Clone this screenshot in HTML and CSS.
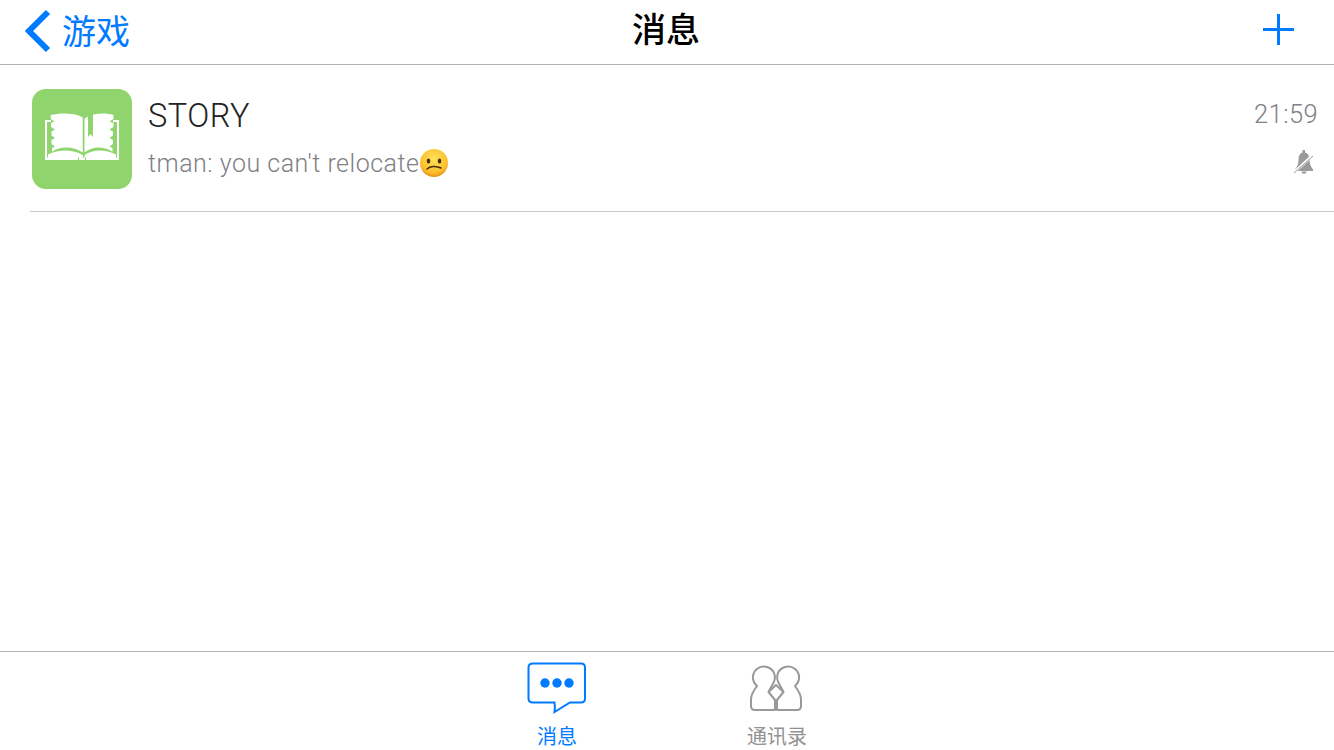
FILE: index.html
```html
<!DOCTYPE html>
<html lang="zh">
<head>
<meta charset="utf-8">
<title>消息</title>
<link rel="stylesheet" href="styles.css">
</head>
<body>
<div class="app">
  <header class="nav">
    <div class="nav-left">
      <svg class="back" width="28" height="44" viewBox="0 0 28 44"><path d="M25 3 L6 22 L25 41" fill="none" stroke="#007aff" stroke-width="6"/></svg>
      <span class="back-label">游戏</span>
    </div>
    <h1 class="nav-title">消息</h1>
    <svg class="plus" width="31" height="31" viewBox="0 0 31 31"><path d="M15.500 0V31M0 15.500H31" stroke="#007aff" stroke-width="3"/></svg>
  </header>
  <main class="list">
    <div class="row">
      <div class="avatar">
        <svg width="74" height="47" viewBox="0 0 74 47">
          <path d="M0 7H6V9H2V44.500H72V9H68V7H74V47H0Z" fill="#fff"/>
          <path d="M5.700 2C14 0 28 -1 37.700 4.300V39.500C28 33 16 33 7 38.700V35L10 33.500L6.500 31V27L10 25L6.500 22.500V18.500L10 16.500L6 14V10L9.500 8.500L5.700 6Z" fill="#fff"/>
          <path d="M39.500 5.500L43 3.500V24L45.500 21L48 24V1.500C55 0 62 0 68.500 2V6L64.500 8.500L68.500 10V14L64.500 16.500L68 18.500V22.500L64.500 25L68 27V31L64.500 33.500L67.500 35V38.700C58 33 48 33 39.500 39.500Z" fill="#fff"/>
          <path d="M3 41.500C14 36 28 36 37.700 42V45H3Z" fill="#fff"/>
          <path d="M71 41.500C60 36 48 36 39.500 42V45H71Z" fill="#fff"/>
          <path d="M33.500 44.500V47M40.500 44.500V47" stroke="#8fd46c" stroke-width="1"/>
        </svg>
      </div>
      <div class="row-body">
        <div class="row-line top">
          <span class="name">STORY</span>
          <span class="time">21:59</span>
        </div>
        <div class="row-line bottom">
          <span class="preview">tman: you can't relocate<span class="emoji"><svg width="30" height="30" viewBox="0 0 30 30"><defs><radialGradient id="f" cx="50%" cy="35%" r="65%"><stop offset="0" stop-color="#ffe15a"/><stop offset="0.75" stop-color="#fbc02d"/><stop offset="1" stop-color="#e8901a"/></radialGradient></defs><circle cx="15" cy="15" r="14" fill="url(#f)"/><ellipse cx="9.500" cy="13" rx="1.800" ry="2.500" fill="#4a2c0a"/><ellipse cx="20.500" cy="13" rx="1.800" ry="2.500" fill="#4a2c0a"/><path d="M8 21C11 18 17 17.500 22 20" fill="none" stroke="#4a2c0a" stroke-width="1.500" stroke-linecap="round"/></svg></span></span>
          <svg class="mute" width="20" height="24" viewBox="0 0 20 24"><path d="M8.500 0H11V2.500C14.500 3.500 15.500 6 15.500 10C15.500 14 17 17 19 19.500V21H1V19.500C3 17 4.500 14 4.500 10C4.500 6 5.500 3.500 8.500 2.500Z" fill="#9a9a9a"/><path d="M7.500 21.500H12.500C12.500 24.500 7.500 24.500 7.500 21.500Z" fill="#9a9a9a"/><path d="M0 22.500L19 5" stroke="#fff" stroke-width="3"/><path d="M0 23L19 6" stroke="#9a9a9a" stroke-width="1"/></svg>
        </div>
      </div>
    </div>
  </main>
  <footer class="tabs">
    <div class="tab active">
      <svg width="60" height="52" viewBox="0 0 60 52"><path d="M6 1.500H54C56.500 1.500 58 3 58 5.500V36.500C58 39 56.500 40.500 54 40.500H43L27.500 50C28 47 28 43 27.500 40.500H6C3.500 40.500 1.500 39 1.500 36.500V5.500C1.500 3 3.500 1.500 6 1.500Z" fill="none" stroke="#007aff" stroke-width="2"/><circle cx="18" cy="21" r="4.700" fill="#007aff"/><circle cx="30" cy="21" r="4.700" fill="#007aff"/><circle cx="42" cy="21" r="4.700" fill="#007aff"/></svg>
      <span class="tab-label">消息</span>
    </div>
    <div class="tab">
      <svg width="60" height="52" viewBox="0 0 60 52"><g fill="none" stroke="#999" stroke-width="2" stroke-linejoin="round"><path d="M10 24A11 11 0 1 1 26.500 20.800L21.500 30L28 38V48H8Q4 48 4 44V37C4 32 7 28 10 24Z"/><path d="M48 24A11 11 0 1 0 31.500 20.800L36.500 30L30 38V48H50Q54 48 54 44V37C54 32 51 28 48 24Z"/><path d="M21.500 30L29 23L36.500 30"/></g></svg>
      <span class="tab-label">通讯录</span>
    </div>
  </footer>
</div>
</body>
</html>
```
FILE: styles.css
```css
* { box-sizing: border-box; }
html, body { margin: 0; height: 100%; background: #fff; }
body { font-family: "Liberation Sans", "Noto Sans CJK SC", sans-serif; }
.app { width: 1334px; height: 750px; display: flex; flex-direction: column; overflow: hidden; }
.nav { height: 65px; flex: none; display: flex; align-items: center; justify-content: space-between; padding: 0 40px 5px 23px; border-bottom: 1px solid #b2b2b2; position: relative; }
.nav-left { display: flex; align-items: center; gap: 11px; margin-top: 3px; }
.back-label { font-size: 34px; line-height: 42px; margin-top: 2px; color: #007aff; }
.nav-title { position: absolute; left: 0; right: 0; top: 8px; margin: 0; padding-right: 2px; text-align: center; font-size: 34px; line-height: 44px; font-weight: 500; color: #000; }
.list { flex: 1; padding: 0 0 0 30px; }
.row { height: 147px; display: flex; align-items: flex-start; padding: 24px 16px 0 2px; border-bottom: 1px solid #c8c7cc; }
.avatar { width: 100px; height: 100px; flex: none; background: #8fd46c; border-radius: 14px; display: flex; align-items: center; justify-content: center; padding-bottom: 5px; }
.row-body { flex: 1; margin-left: 16px; }
.row-line { display: flex; justify-content: space-between; align-items: center; }
.row-line.top { height: 54px; }
.row-line.bottom { height: 40px; }
.name { font-family: Roboto, sans-serif; font-weight: 300; font-size: 32.500px; letter-spacing: 0.5px; color: #222; }
.time { font-family: Roboto, sans-serif; font-weight: 300; font-size: 25.500px; letter-spacing: 0.4px; color: #808085; margin-top: -4px; }
.preview { font-family: Roboto, sans-serif; font-weight: 300; font-size: 25px; letter-spacing: 0.5px; color: #808085; display: flex; align-items: center; }
.emoji { display: inline-flex; }
.mute { margin: 0 4px 2px 0; }
.tabs { height: 99px; flex: none; display: flex; justify-content: center; gap: 160px; border-top: 1px solid #b2b2b2; padding-top: 10px; }
.tab { width: 60px; display: flex; flex-direction: column; align-items: center; color: #929292; }
.tab.active { color: #007aff; }
.tab-label { font-size: 20px; line-height: 24px; margin-top: 11px; white-space: nowrap; }
```
